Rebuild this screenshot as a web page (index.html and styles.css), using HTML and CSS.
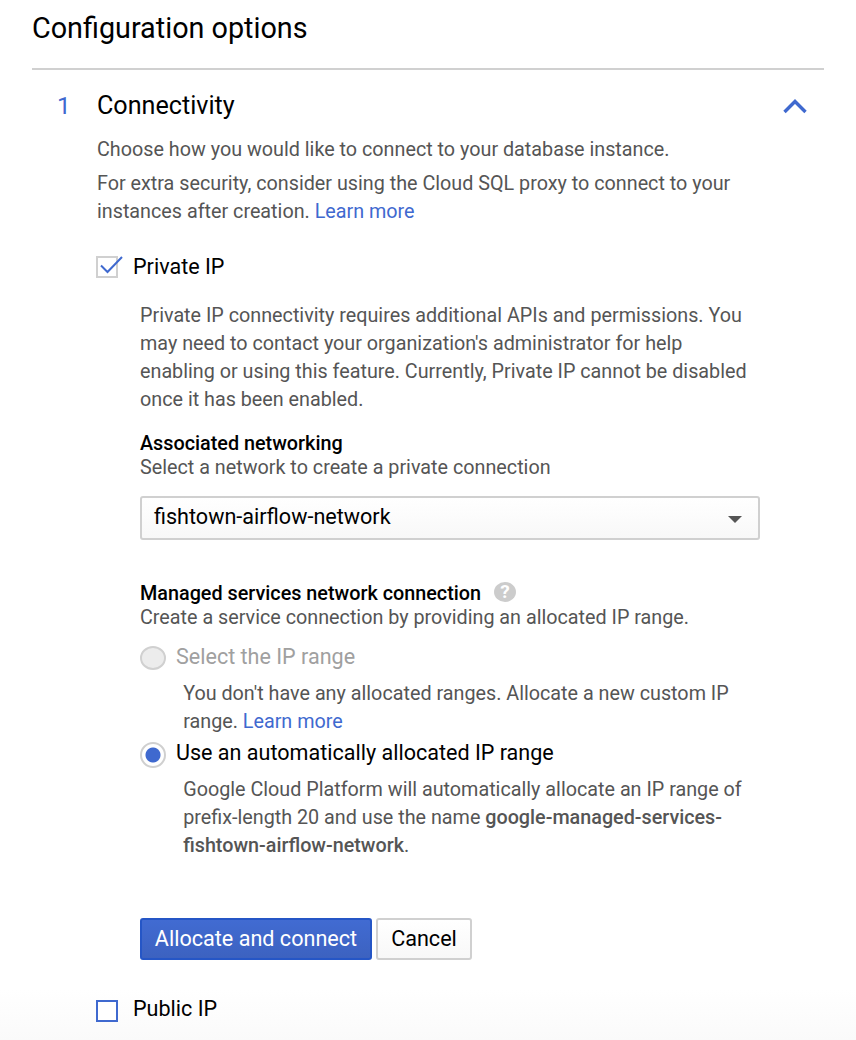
FILE: index.html
```html
<!DOCTYPE html>
<html lang="en">
<head>
<meta charset="utf-8">
<title>Configuration options</title>
<link rel="stylesheet" href="styles.css">
</head>
<body>
<main class="page">
  <h1 class="title">Configuration options</h1>
  <section class="section">
    <div class="number">1</div>
    <div class="content">
      <header class="head">
        <h2 class="heading">Connectivity</h2>
        <svg class="chevron" width="24" height="16" viewBox="0 0 24 16"><path d="M1.500 14 12 3.500 22.500 14" fill="none" stroke="#3f69cf" stroke-width="3.400"/></svg>
      </header>
      <p class="text intro">Choose how you would like to connect to your database instance.</p>
      <p class="text extra">For extra security, consider using the Cloud SQL proxy to connect to your<br>instances after creation. <a class="link">Learn more</a></p>
      <div class="check private">
        <svg class="box" width="28" height="24" viewBox="0 0 28 24"><rect x="1" y="3" width="20" height="20" fill="#fff" stroke="#d0d0d0" stroke-width="2"/><path d="M5 11.500l6.500 6.500L26 3" fill="none" stroke="#3f69cf" stroke-width="2"/></svg>
        <span class="option">Private IP</span>
      </div>
      <div class="details">
        <p class="text notice">Private IP connectivity requires additional APIs and permissions. You<br>may need to contact your organization's administrator for help<br>enabling or using this feature. Currently, Private IP cannot be disabled<br>once it has been enabled.</p>
        <h3 class="label">Associated networking</h3>
        <p class="text hint">Select a network to create a private connection</p>
        <div class="select"><span class="value">fishtown-airflow-network</span><svg class="arrow" width="14" height="7" viewBox="0 0 14 7"><path d="M0 0h14L7 7z" fill="#555"/></svg></div>
        <div class="label-row"><h3 class="label">Managed services network connection</h3><span class="help">?</span></div>
        <p class="text hint">Create a service connection by providing an allocated IP range.</p>
        <div class="radio-row first"><span class="radio disabled"></span><span class="option muted">Select the IP range</span></div>
        <p class="text sub">You don't have any allocated ranges. Allocate a new custom IP<br>range. <a class="link">Learn more</a></p>
        <div class="radio-row second"><span class="radio selected"></span><span class="option">Use an automatically allocated IP range</span></div>
        <p class="text sub">Google Cloud Platform will automatically allocate an IP range of<br>prefix-length 20 and use the name <b>google-managed-services-<br>fishtown-airflow-network</b>.</p>
        <div class="actions"><button class="button primary">Allocate and connect</button><button class="button">Cancel</button></div>
      </div>
      <div class="check public">
        <svg class="box" width="28" height="24" viewBox="0 0 28 24"><rect x="1" y="3" width="20" height="20" fill="#fff" stroke="#3f69cf" stroke-width="2"/></svg>
        <span class="option">Public IP</span>
      </div>
    </div>
  </section>
</main>
</body>
</html>
```
FILE: styles.css
```css
* { box-sizing: border-box; }
body { margin: 0; background: #fff; font-family: Roboto, sans-serif; color: #000; }
h1, h2, h3, p { margin: 0; }
.page { height: 1040px; padding: 0 32px; overflow: hidden; background: linear-gradient(#fff 990px, #fafafa 1040px); }
.title { height: 70px; padding-top: 10px; border-bottom: 2px solid #d0d0d0; font-size: 28.75px; line-height: 36px; font-weight: 400; }
.section { display: flex; }
.number { width: 65px; padding: 20px 0 0 25px; font-size: 24.5px; line-height: 32px; color: #3f69cf; }
.content { flex: 1; }
.head { display: flex; justify-content: space-between; padding: 20px 17px 0 0; }
.heading { font-size: 25.15px; line-height: 32px; font-weight: 400; }
.chevron { margin-top: 8px; }
.text { font-size: 19.76px; line-height: 28px; color: #555; white-space: nowrap; }
.intro { margin-top: 14px; }
.extra { margin-top: 6px; }
.link { color: #3f69cf; }
.check { display: flex; align-items: flex-start; height: 28px; margin-left: -1px; }
.box { margin: 1px 9px 0 0; }
.private { margin-top: 27px; }
.public { margin-top: 35px; }
.public .box { margin-top: 3px; }
.option { font-size: 21.55px; line-height: 28px; white-space: nowrap; }
.details { width: 620px; margin: 21px 0 0 43px; }
.label { font-size: 19.8px; line-height: 24px; font-weight: 500; white-space: nowrap; }
.notice { margin-bottom: 18px; }
.hint { line-height: 24px; }
.select { display: flex; align-items: center; justify-content: space-between; height: 44px; margin: 16px 0 42px; padding: 0 16px 3px 12px; border: 2px solid #d0d0d0; border-radius: 3px; background: linear-gradient(#fff, #f8f8f8); font-size: 21.6px; }
.arrow { margin-top: 5px; }
.label-row { display: flex; align-items: center; gap: 13px; height: 24px; }
.help { width: 22px; height: 20px; margin-top: -4px; border-radius: 50%; background: #ccc; color: #fff; font-size: 19px; line-height: 20px; font-weight: 700; text-align: center; }
.radio-row { display: flex; align-items: center; height: 28px; gap: 10px; }
.first { margin: 13px 0 9px; }
.second { margin: 3px 0 9px; }
.radio { width: 26px; height: 26px; margin-top: 3px; border: 2px solid #d0d0d0; border-radius: 50%; }
.disabled { height: 24px; margin-top: 2px; background: #ececec; }
.selected { background: radial-gradient(circle, #3f69cf 7px, #fff 8px); }
.muted { color: #a0a0a0; }
.sub { margin-left: 43.2px; }
b { font-weight: 500; }
.actions { display: flex; gap: 4px; margin-top: 58px; }
.button { height: 42px; padding: 0 12px 2px; border: 2px solid #d0d0d0; border-radius: 3px; background: linear-gradient(#fff, #f8f8f8); font: 21.6px Roboto, sans-serif; color: #000; width: 96px; white-space: nowrap; }
.primary { width: 232px; border-color: #2556c6; background: linear-gradient(#416bd2, #3c62c0); color: #fff; }
```
